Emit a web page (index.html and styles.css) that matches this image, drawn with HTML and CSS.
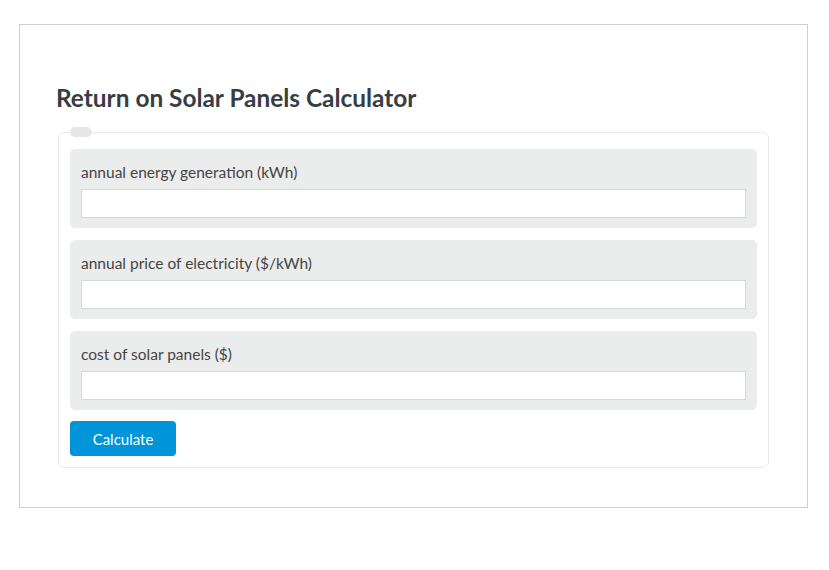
FILE: index.html
```html
<!DOCTYPE html>
<html lang="en">
<head>
    <meta charset="UTF-8">
    <meta name="viewport" content="width=device-width, initial-scale=1.0">
    <title>Return on Solar Panels Calculator</title>
    <link rel="stylesheet" href="styles.css">
</head>
<body>
    <div class="calc-box">
        <h1 class="calc-title">Return on Solar Panels Calculator</h1>
        <form class="calc-form">
            <fieldset class="calc-fields">
                <legend class="calc-legend"></legend>
                <div class="field">
                    <label for="energy">annual energy generation (kWh)</label>
                    <input type="text" id="energy">
                </div>
                <div class="field">
                    <label for="price">annual price of electricity ($/kWh)</label>
                    <input type="text" id="price">
                </div>
                <div class="field">
                    <label for="cost">cost of solar panels ($)</label>
                    <input type="text" id="cost">
                </div>
                <button type="button" class="calc-btn">Calculate</button>
            </fieldset>
        </form>
    </div>
</body>
</html>
```

FILE: styles.css
```css
body {
    font-family: Lato, "Open Sans", sans-serif;
    margin: 0;
    padding: 24px 21px 0 19px;
    color: #444;
    background: #fff;
}

.calc-box {
    border: 1px solid #cfcfcf;
    padding: 58px 38px 39px 36px;
}

.calc-title {
    font-size: 24.4px;
    font-weight: 700;
    line-height: 30px;
    color: #383d44;
    margin: 0 0 14px 0;
}

.calc-form {
    margin: 0 0 0 2px;
}

.calc-fields {
    border: 1px solid #e8e8e8;
    border-radius: 6px;
    margin: 0;
    padding: 12px 11px 11px 11px;
}

.calc-legend {
    width: 22px;
    height: 10px;
    padding: 0;
    margin: 0;
    background: #e6e7e7;
    border-radius: 5px;
}

.field {
    background: #ebecec;
    border-radius: 5px;
    padding: 12px 11px 10px 11px;
    margin-bottom: 12px;
}

.field label {
    display: block;
    font-size: 15.5px;
    line-height: 22px;
    color: #454545;
    margin-bottom: 6px;
}

.field input {
    display: block;
    box-sizing: border-box;
    width: 100%;
    height: 29px;
    border: 1px solid #d9d9d9;
    background: #fff;
    margin: 0;
    padding: 0 6px;
    font-family: inherit;
    font-size: 15px;
}

.calc-btn {
    display: block;
    width: 106px;
    height: 35px;
    margin-top: -1px;
    background: #0094d9;
    color: #fff;
    border: none;
    border-radius: 4px;
    font-family: inherit;
    font-size: 15px;
    cursor: pointer;
}
```
